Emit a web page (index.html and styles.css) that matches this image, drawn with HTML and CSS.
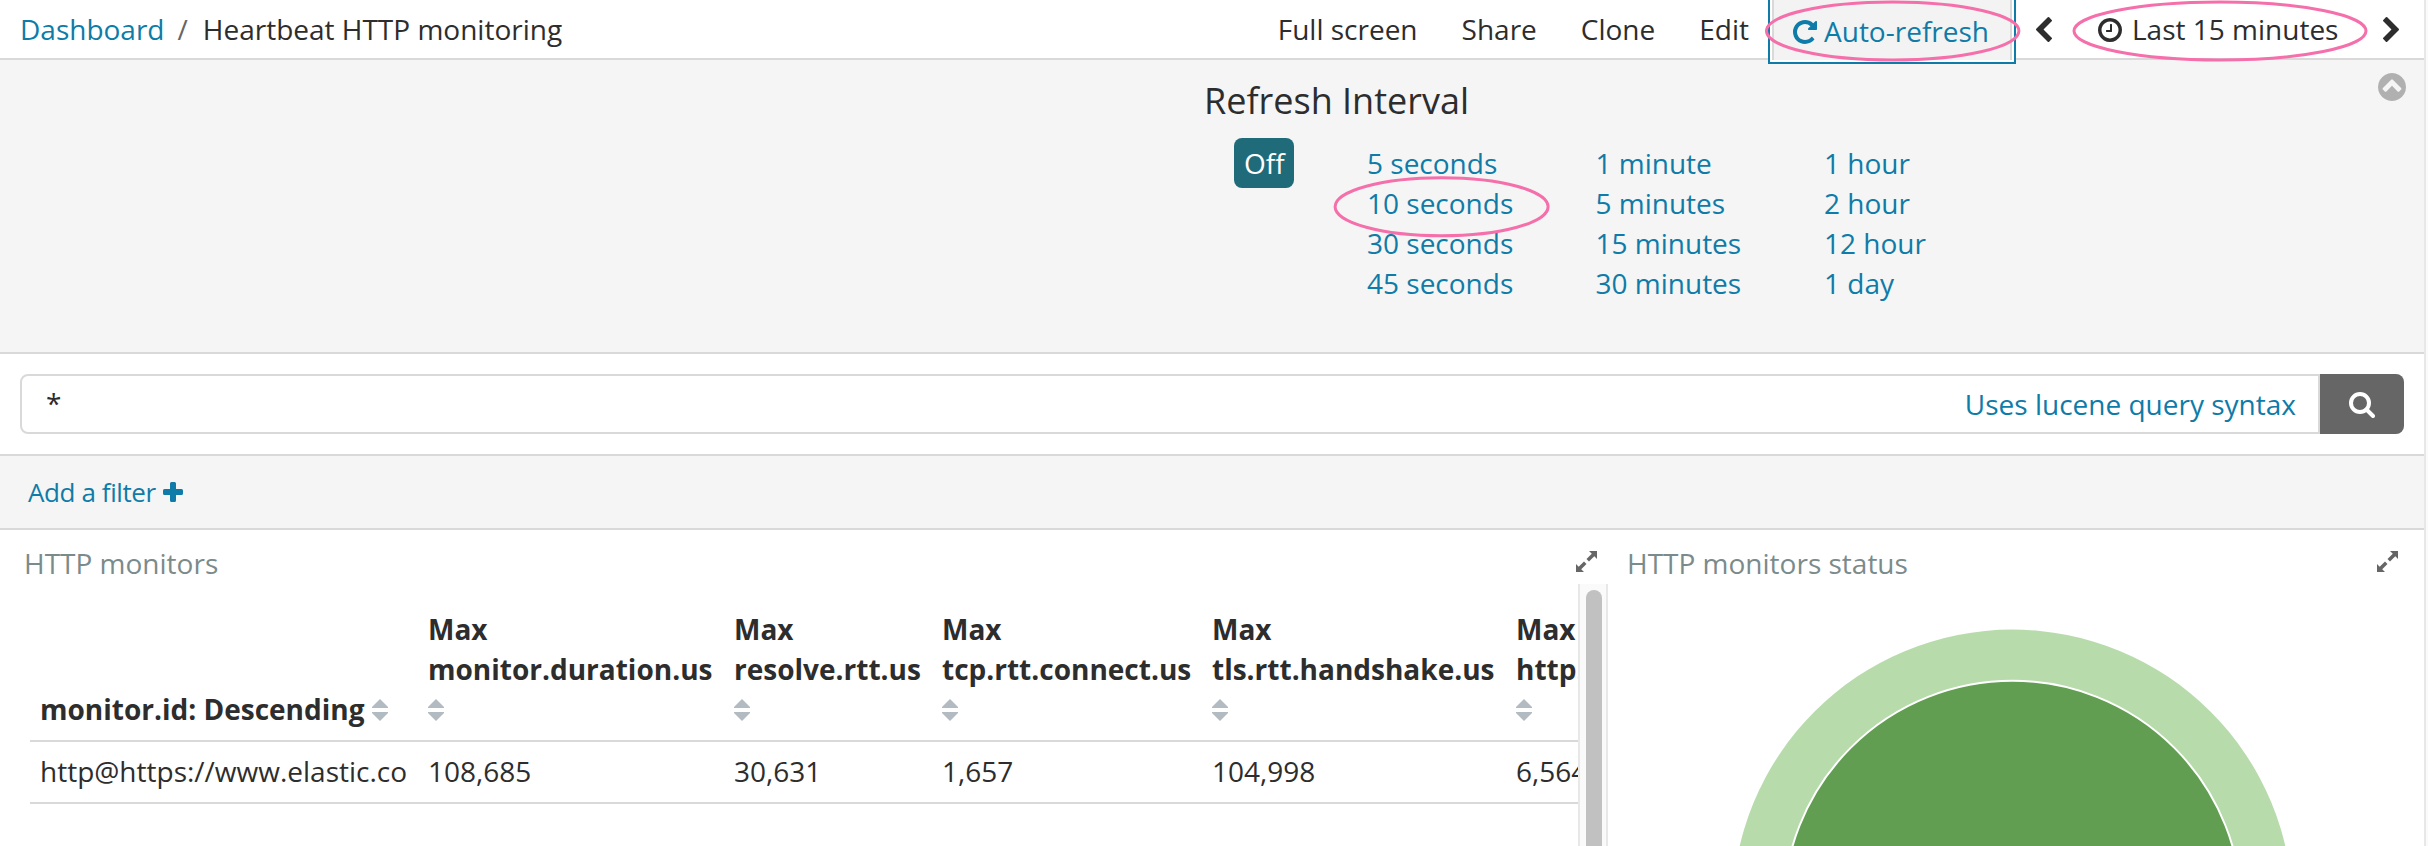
FILE: index.html
```html
<!DOCTYPE html>
<html lang="en">
<head>
<meta charset="utf-8">
<title>Heartbeat HTTP monitoring</title>
<link rel="stylesheet" href="styles.css">
</head>
<body>
<svg class="defs" width="0" height="0">
  <symbol id="sort" viewBox="0 0 16 22"><path d="M8 0L16 8V9H0V8ZM0 13H16V14L8 22L0 14Z"/></symbol>
  <symbol id="expand" viewBox="0 0 21 21"><path d="M13 0H21V8L18.300 5.200L13 10.500L10.500 8L15.800 2.700ZM0 13L2.700 15.800L8 10.500L10.500 13L5.200 18.300L8 21H0Z"/></symbol>
</svg>
<div class="page">
  <header class="topbar">
    <nav class="crumbs"><a class="link" href="#">Dashboard</a><span class="slash">/</span><span>Heartbeat HTTP monitoring</span></nav>
    <div class="menu">
      <span class="menu-item">Full screen</span>
      <span class="menu-item">Share</span>
      <span class="menu-item">Clone</span>
      <span class="menu-item">Edit</span>
    </div>
    <div class="auto"><div class="auto-inner">
      <svg class="i-repeat" viewBox="0 0 1536 1536"><path d="M1536 128v448q0 26-19 45t-45 19h-448q-42 0-59-40-17-39 14-69l138-138q-148-137-349-137-104 0-198.500 40.500t-163.500 109.500-109.500 163.500-40.500 198.500 40.500 198.500 109.500 163.500 163.500 109.500 198.500 40.500q119 0 225-52t179-147q7-10 23-12 15 0 25 9l137 138q9 8 9.500 20.500t-7.500 22.500q-109 132-264 204.500t-327 72.500q-156 0-298-61t-245-164-164-245-61-298 61-298 164-245 245-164 298-61q147 0 284.500 55.500t244.500 156.500l130-129q29-31 70-14 39 17 39 59z"/></svg>
      <span>Auto-refresh</span>
    </div></div>
    <div class="time">
      <svg class="i-chev" viewBox="410 26 1036 1612"><path d="M1427 301l-531 531 531 531q19 19 19 45t-19 45l-166 166q-19 19-45 19t-45-19l-742-742q-19-19-19-45t19-45l742-742q19-19 45-19t45 19l166 166q19 19 19 45t-19 45z"/></svg>
      <svg class="i-clock" viewBox="128 128 1536 1536"><path d="M1024 544v448q0 14-9 23t-23 9h-320q-14 0-23-9t-9-23v-64q0-14 9-23t23-9h224v-352q0-14 9-23t23-9h64q14 0 23 9t9 23zm416 352q0-148-73-273t-198-198-273-73-273 73-198 198-73 273 73 273 198 198 273 73 273-73 198-198 73-273zm224 0q0 209-103 385.500t-279.500 279.500-385.500 103-385.500-103-279.500-279.500-103-385.500 103-385.500 279.500-279.500 385.500-103 385.500 103 279.500 279.500 103 385.500z"/></svg>
      <span class="range">Last 15 minutes</span>
      <svg class="i-chev i-next" viewBox="346 26 1036 1612"><path d="M1363 877l-742 742q-19 19-45 19t-45-19l-166-166q-19-19-19-45t19-45l531-531-531-531q-19-19-19-45t19-45l166-166q19-19 45-19t45 19l742 742q19 19 19 45t-19 45z"/></svg>
    </div>
  </header>

  <section class="interval">
    <div class="interval-body">
      <h2>Refresh Interval</h2>
      <div class="choices">
        <span class="off">Off</span>
        <ul><li>5 seconds</li><li>10 seconds</li><li>30 seconds</li><li>45 seconds</li></ul>
        <ul><li>1 minute</li><li>5 minutes</li><li>15 minutes</li><li>30 minutes</li></ul>
        <ul><li>1 hour</li><li>2 hour</li><li>12 hour</li><li>1 day</li></ul>
      </div>
    </div>
    <svg class="i-collapse" viewBox="128 128 1536 1536"><path d="M1293 1139l102-102q19-19 19-45t-19-45l-454-454q-19-19-45-19t-45 19l-454 454q-19 19-19 45t19 45l102 102q19 19 45 19t45-19l307-307 307 307q19 19 45 19t45-19zm371-243q0 209-103 385.500t-279.500 279.500-385.500 103-385.500-103-279.500-279.500-103-385.500 103-385.500 279.500-279.500 385.500-103 385.500 103 279.500 279.500 103 385.500z"/></svg>
  </section>

  <section class="query">
    <div class="query-input"><span class="query-text">*</span><a class="link" href="#">Uses lucene query syntax</a></div>
    <div class="query-button"><svg class="i-search" viewBox="0 0 26 26"><circle cx="11" cy="11" r="9"/><path d="M17.500 17.500L24 24"/></svg></div>
  </section>

  <section class="filters"><a class="link" href="#">Add a filter</a><svg class="i-plus" viewBox="0 0 20 20"><path d="M8.500 0h3q1.500 0 1.500 1.500V7h5.500q1.500 0 1.500 1.500v3q0 1.500-1.500 1.500H13v5.500q0 1.500-1.500 1.500h-3q-1.500 0-1.500-1.500V13H1.500Q0 13 0 11.500v-3Q0 7 1.500 7H7V1.500Q7 0 8.500 0z"/></svg></section>

  <main class="panels">
    <section class="panel panel-table">
      <div class="panel-head"><span>HTTP monitors</span><svg class="i-expand"><use href="#expand"/></svg></div>
      <div class="scroller">
        <div class="table-view">
          <table>
            <colgroup><col class="c1"><col class="c2"><col class="c3"><col class="c4"><col class="c5"><col class="c6"></colgroup>
            <thead><tr>
              <th>monitor.id: Descending<svg class="i-sort after"><use href="#sort"/></svg></th>
              <th>Max<br>monitor.duration.us<br><svg class="i-sort"><use href="#sort"/></svg></th>
              <th>Max<br>resolve.rtt.us<br><svg class="i-sort"><use href="#sort"/></svg></th>
              <th>Max<br>tcp.rtt.connect.us<br><svg class="i-sort"><use href="#sort"/></svg></th>
              <th>Max<br>tls.rtt.handshake.us<br><svg class="i-sort"><use href="#sort"/></svg></th>
              <th>Max<br>http.rtt<br><svg class="i-sort"><use href="#sort"/></svg></th>
            </tr></thead>
            <tbody><tr><td>http@https://www.elastic.co</td><td>108,685</td><td>30,631</td><td>1,657</td><td>104,998</td><td>6,564</td></tr></tbody>
          </table>
        </div>
        <div class="track"><div class="thumb"></div></div>
      </div>
    </section>
    <section class="panel panel-pie">
      <div class="panel-head"><span>HTTP monitors status</span><svg class="i-expand"><use href="#expand"/></svg></div>
      <svg class="pie" viewBox="1608 584 816 262"><circle cx="2012.500" cy="909.800" r="280.200" fill="#b7dbab"/><circle cx="2012.500" cy="909.800" r="229" fill="#629e51" stroke="#fff" stroke-width="2"/></svg>
    </section>
  </main>

  <svg class="marks" viewBox="0 0 2424 846">
    <ellipse cx="1892.700" cy="31" rx="126.200" ry="29"/>
    <ellipse cx="2220" cy="31" rx="146" ry="29"/>
    <ellipse cx="1441.600" cy="206.700" rx="106.500" ry="29"/>
  </svg>
</div>
</body>
</html>
```
FILE: styles.css
```css
* { box-sizing: border-box; }
body {
  margin: 0;
  width: 2428px;
  height: 846px;
  overflow: hidden;
  background: #fafafa;
  color: #2d2d2d;
  font: 28px/40px "Open Sans", "Noto Sans", sans-serif;
}
.defs { position: absolute; }
svg { display: block; fill: currentColor; flex: none; }
.page {
  position: relative;
  display: flex;
  flex-direction: column;
  width: 2426px;
  height: 846px;
  overflow: hidden;
  background: #fff;
  border-right: 2px solid #e8e8e8;
}
.link { color: #0f7ba8; text-decoration: none; }

.topbar {
  position: relative;
  z-index: 1;
  display: flex;
  align-items: flex-start;
  height: 60px;
  border-bottom: 2px solid #d9d9d9;
  white-space: nowrap;
}
.crumbs { display: flex; padding: 9px 0 0 20px; }
.slash { margin: 0 15px 0 13px; color: #666; }
.menu { display: flex; gap: 44px; margin-left: auto; padding: 9px 19px 0 0; }
.auto {
  width: 248px;
  height: 64px;
  padding: 0 2px 2px;
  background: #fff;
  border: 2px solid #0f7ba8;
  border-top: 0;
}
.auto-inner {
  display: flex;
  height: 60px;
  gap: 7px;
  padding: 11px 0 0 19px;
  background: #f3f3f3;
  border: solid #d9d9d9;
  border-width: 0 2px;
  color: #0f7ba8;
}
.i-repeat { width: 24px; height: 24px; margin-top: 9px; }
.time { display: flex; width: 408px; padding: 9px 0 0 20px; }
.i-chev { width: 16px; height: 25px; margin-top: 8px; }
.i-clock { width: 24px; height: 24px; margin: 9px 0 0 46px; }
.range { width: 251px; margin-left: 10px; }

.interval {
  display: flex;
  height: 294px;
  background: #f5f5f5;
  border-bottom: 2px solid #d9d9d9;
}
.interval-body { margin-left: 1204px; width: 1174px; padding-top: 16px; }
h2 { margin: 0; font-size: 36px; line-height: 50px; font-weight: 400; }
.choices { display: flex; padding: 12px 0 0 30px; }
.off {
  width: 60px;
  height: 50px;
  margin-right: 73px;
  padding: 5px 0 0 10px;
  border-radius: 8px;
  background: #1f6b7a;
  color: #fff;
}
ul { width: 228.500px; margin: 5px 0 0; padding: 0; list-style: none; color: #0f7ba8; }
.i-collapse { width: 28px; height: 28px; margin-top: 13px; color: #b0b0b0; }

.query { display: flex; height: 102px; padding: 20px; border-bottom: 2px solid #d9d9d9; }
.query-input {
  display: flex;
  justify-content: space-between;
  flex: 1;
  height: 60px;
  padding: 8px 22px 0 24px;
  border: 2px solid #d9d9d9;
  border-radius: 8px 0 0 8px;
}
.query-text { line-height: 38px; }
.query-button {
  display: flex;
  width: 84px;
  height: 60px;
  padding: 18px 0 0 29px;
  background: #666;
  border-radius: 0 8px 8px 0;
}
.i-search { width: 26px; height: 26px; fill: none; stroke: #fff; stroke-width: 4; stroke-linecap: round; }

.filters {
  display: flex;
  height: 74px;
  padding: 16px 0 0 28px;
  background: #f5f5f5;
  border-bottom: 2px solid #d9d9d9;
  font-size: 26px;
  letter-spacing: -0.4px;
}
.filters .link { width: 135px; white-space: nowrap; }
.i-plus { width: 20px; height: 20px; margin-top: 10px; color: #0f7ba8; }

.panels { display: flex; flex: 1; }
.panel-table { width: 1608px; }
.panel-pie { width: 816px; }
.panel-head { display: flex; justify-content: space-between; height: 54px; padding: 13px 11px 0 24px; color: #7b8b8b; }
.panel-pie .panel-head { padding: 13px 26px 0 19px; }
.i-expand { width: 21px; height: 21px; margin-top: 8px; color: #666; }
.scroller { display: flex; height: 262px; }
.table-view { width: 1578px; padding: 15px 0 0 30px; overflow: hidden; }
table { table-layout: fixed; width: 1720px; border-collapse: separate; border-spacing: 0; }
.c1 { width: 388px; }
.c2 { width: 306px; }
.c3 { width: 208px; }
.c4 { width: 270px; }
.c5 { width: 304px; }
.c6 { width: 244px; }
th, td { padding: 10px 0 10px 10px; text-align: left; vertical-align: bottom; white-space: nowrap; border-bottom: 2px solid #d9d9d9; }
th { height: 143px; padding-bottom: 11px; }
td { height: 62px; padding: 9px 0 11px 10px; }
.i-sort { display: inline-block; width: 16px; height: 22px; vertical-align: -1px; color: #b2bac2; }
.after { margin-left: 7px; }
.track { width: 30px; padding: 6px 0 0 6px; background: #fafafa; border: solid #e8e8e8; border-width: 0 2px; }
.thumb { width: 16px; height: 256px; border-radius: 8px 8px 0 0; background: #c1c1c1; }
.pie { width: 816px; height: 262px; }

/* Hand-drawn callouts over the controls */
.marks { position: absolute; z-index: 2; top: 0; left: 0; width: 2424px; height: 846px; fill: none; stroke: #f56fab; stroke-width: 3; pointer-events: none; }
```
